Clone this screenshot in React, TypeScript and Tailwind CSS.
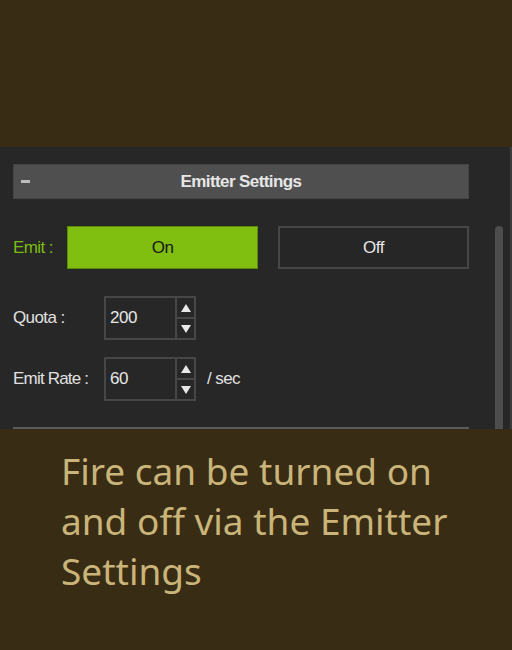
import { ChevronUp } from 'lucide-react'

function Spinner({ value }: { value: string }) {
  return (
    <div className="flex h-[44px] w-[92px] border-2 border-[#474747] bg-[#272727]">
      <div className="flex flex-1 items-center pl-[4px] text-[17px] tracking-[-0.5px] text-[#e6e6e6]">{value}</div>
      <div className="flex w-[19px] flex-col border-l-2 border-[#474747]">
        <div className="flex flex-1 items-center justify-center border-b-2 border-[#474747]">
          <span className="h-0 w-0 border-x-[5px] border-b-[8px] border-x-transparent border-b-[#e8e8e8]" />
        </div>
        <div className="flex flex-1 items-center justify-center">
          <span className="h-0 w-0 border-x-[5px] border-t-[8px] border-x-transparent border-t-[#e8e8e8]" />
        </div>
      </div>
    </div>
  )
}

export default function App() {
  void ChevronUp
  return (
    <div className="flex h-[650px] w-[512px] flex-col bg-[#392c14]" style={{ fontFamily: '"Liberation Sans", Arial, sans-serif' }}>
      <div className="h-[147px] shrink-0" />

      <div className="flex h-[282px] shrink-0 overflow-hidden bg-[#272727]">
        <div className="flex w-[469px] shrink-0 flex-col pl-[13px] pt-[17px]">
          <div className="flex h-[35px] items-center border border-[#444] bg-[#4f4f4f]">
            <span className="ml-[7px] h-[3px] w-[9px] bg-[#bdbdbd]" />
            <span className="flex-1 pr-[16px] text-center text-[17px] font-bold tracking-[-0.6px] text-[#e6e6e6]">
              Emitter Settings
            </span>
          </div>

          <div className="mt-[27px] flex h-[43px] items-center">
            <span className="w-[54px] text-[17px] tracking-[-0.6px] text-[#7dbb10]">Emit :</span>
            <button className="flex h-full w-[191px] items-center justify-center border border-[#5b8a0c] bg-[#80bf0f] text-[17px] tracking-[-0.5px] text-[#161616]">
              On
            </button>
            <button className="ml-[20px] flex h-full w-[191px] items-center justify-center border-2 border-[#474747] bg-[#262626] text-[17px] tracking-[-0.5px] text-[#e6e6e6]">
              Off
            </button>
          </div>

          <div className="mt-[27px] flex items-center">
            <span className="w-[91px] text-[17px] tracking-[-0.6px] text-[#e0e0e0]">Quota :</span>
            <Spinner value="200" />
          </div>

          <div className="mt-[17px] flex items-center">
            <span className="w-[91px] text-[17px] tracking-[-0.8px] text-[#e0e0e0]">Emit Rate :</span>
            <Spinner value="60" />
            <span className="ml-[11px] text-[17px] tracking-[-0.6px] text-[#e0e0e0]">/ sec</span>
          </div>

          <div className="mt-[26px] h-[2px] bg-[#5a5a5a]" />
        </div>

        <div className="ml-[26px] flex w-[8px] shrink-0 flex-col pt-[79px]">
          <div className="flex-1 rounded-t-full bg-[#4d4d4d]" />
        </div>
        <div className="flex-1" />
        <div className="w-[2px] shrink-0 bg-[#3c3c3c]" />
      </div>

      <div className="pl-[61px] pt-[17px] text-[37px] leading-[50px] text-[#c9b47a]" style={{ fontFamily: '"Noto Sans", "Open Sans", sans-serif' }}>
        Fire can be turned on
        <br />
        and off via the Emitter
        <br />
        Settings
      </div>
    </div>
  )
}
